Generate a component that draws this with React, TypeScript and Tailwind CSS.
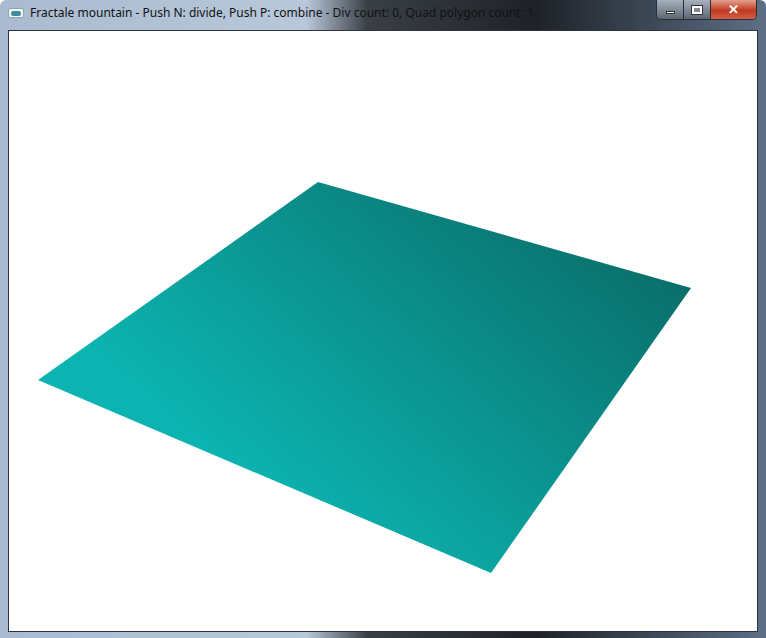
export default function App() {
  return (
    <div className="w-[766px] h-[638px] flex flex-col bg-[linear-gradient(90deg,#a9bbd0_0%,#b8c8da_40%,#3a3f46_48%,#1e2228_70%,#5d6f86_100%)] overflow-hidden rounded-t-[6px]" style={{ fontFamily: '"Noto Sans", "Liberation Sans", sans-serif' }}>
      <div className="h-[30px] flex items-start shrink-0 relative">
        <div className="flex items-center h-[26px] pl-[8px] gap-[6px]">
          <div className="w-[16px] h-[10px] bg-[#f2f4f6] border border-[#8aa] rounded-[2px] flex items-center justify-center">
            <div className="w-[10px] h-[5px] rounded-full bg-[#3e8aa0]" />
          </div>
          <span className="text-[12px] text-[#111] leading-none">Fractale mountain - Push N: divide, Push P: combine - Div count: 0, Quad polygon count: 1</span>
        </div>
        <div className="absolute right-[9px] top-0 flex h-[20px] rounded-b-[5px] overflow-hidden border border-t-0 border-[#2a2f36]">
          <div className="w-[27px] bg-[linear-gradient(#a8b2be,#5c6673)] flex items-center justify-center border-r border-[#2a2f36]">
            <div className="w-[9px] h-[3px] bg-white mt-[6px] border border-[#333]" />
          </div>
          <div className="w-[27px] bg-[linear-gradient(#a8b2be,#5c6673)] flex items-center justify-center border-r border-[#2a2f36]">
            <div className="w-[10px] h-[8px] border-[2px] border-white outline outline-1 outline-[#333]" />
          </div>
          <div className="w-[45px] bg-[linear-gradient(#e4a191,#c0391f_55%,#d0604a)] flex items-center justify-center text-white font-bold text-[13px] leading-none">✕</div>
        </div>
      </div>
      <div className="flex-1 mx-[8px] mb-[8px] bg-white border border-[#2c3440]">
        <svg width="750" height="600" viewBox="8 30 750 600" className="block">
          <defs>
            <linearGradient id="g" x1="620" y1="230" x2="330" y2="560" gradientUnits="userSpaceOnUse">
              <stop offset="0" stopColor="#0a6f6b" />
              <stop offset="1" stopColor="#0cb4b1" />
            </linearGradient>
          </defs>
          <polygon points="317,181 690,287 490,572 37,379" fill="url(#g)" />
        </svg>
      </div>
    </div>
  );
}
